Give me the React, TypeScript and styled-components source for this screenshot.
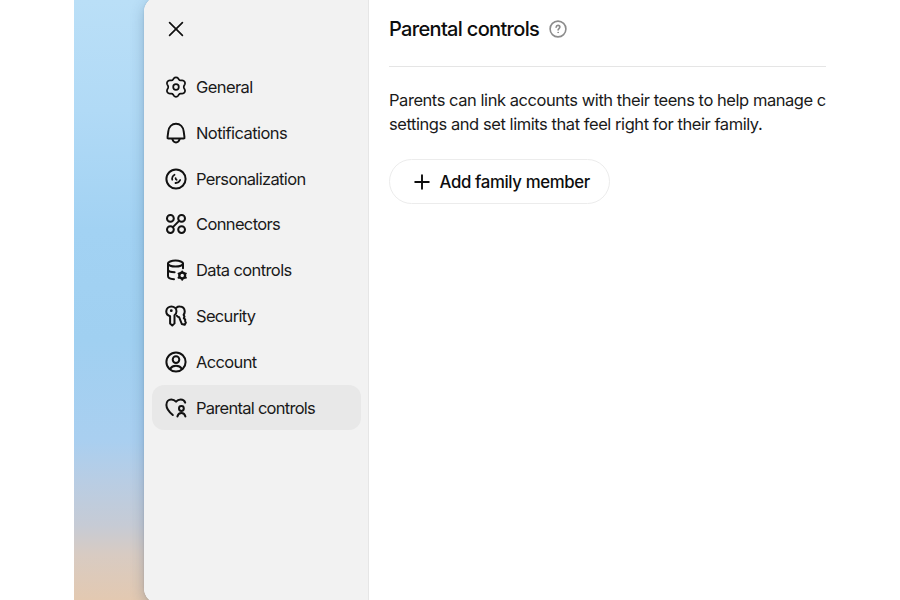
import React from "react";
import styled, { createGlobalStyle } from "styled-components";

const GlobalStyle = createGlobalStyle`
  * { box-sizing: border-box; }
  html, body { margin: 0; background: #fff; overflow: hidden; }
  body { font-family: Inter, "Liberation Sans", sans-serif; color: #1a1a1a; }
`;

const Page = styled.div`
  width: 900px;
  height: 600px;
  padding: 0 74px;
  overflow: hidden;
  background: #fff;
`;

const Backdrop = styled.div`
  width: 752px;
  height: 600px;
  padding-left: 69.5px;
  overflow: hidden;
  background: linear-gradient(180deg, #badff7 0, #b1daf6 110px, #a2d2f3 230px, #a0d0f1 340px, #a9cff0 440px, #b8cde4 480px, #c6cbd5 525px, #d8cbc2 555px, #e3c9b1 600px);
`;

const Dialog = styled.div`
  display: flex;
  width: 720px;
  height: 608px;
  margin-top: -4px;
  border-radius: 16px;
  background: #fff;
  box-shadow: 0 5px 14px rgba(40, 70, 100, 0.28), 0 0 2px rgba(40, 70, 100, 0.18);
  overflow: hidden;
`;

const Sidebar = styled.aside`
  flex: none;
  width: 225.5px;
  padding: 18px 7px 0 8px;
  background: #f2f2f2;
  border-right: 1px solid #e6e6e6;
`;

const CloseButton = styled.button`
  display: flex;
  align-items: center;
  width: 44px;
  height: 30px;
  padding: 0 0 0 13.5px;
  border: 0;
  background: none;
  color: #161616;
`;

const Nav = styled.nav`
  display: flex;
  flex-direction: column;
  gap: 0.85px;
  margin-top: 20.4px;
`;

const NavItem = styled.a<{ $active?: boolean }>`
  display: flex;
  align-items: center;
  height: 45px;
  padding-left: 13.5px;
  gap: 9px;
  border-radius: 12px;
  background: ${(p) => (p.$active ? "#e8e8e8" : "transparent")};
  svg { flex: none; }
`;

const NavLabel = styled.span<{ $spacing: number }>`
  font-size: 16.5px;
  line-height: 24px;
  letter-spacing: ${(p) => p.$spacing}px;
  white-space: nowrap;
`;

const Content = styled.main`
  flex: none;
  width: 457px;
  padding: 19px 0 0 20px;
  overflow: hidden;
`;

const Header = styled.header`
  display: flex;
  align-items: center;
  gap: 9.4px;
  height: 52px;
  padding-bottom: 24px;
  border-bottom: 1.5px solid #e5e5e5;
`;

const Title = styled.h1`
  margin: 0;
  font-size: 20px;
  line-height: 28px;
  font-weight: 500;
  letter-spacing: -0.67px;
  color: #0d0d0d;
`;

const Description = styled.p`
  margin: 20.5px 0 0;
  font-size: 16.5px;
  line-height: 24.4px;
  white-space: nowrap;
`;

const Line = styled.span<{ $spacing: number }>`
  display: block;
  letter-spacing: ${(p) => p.$spacing}px;
`;

const AddButton = styled.button`
  display: flex;
  align-items: center;
  width: 221px;
  height: 45px;
  margin-top: 23px;
  padding: 0 0 0 24px;
  gap: 9.5px;
  border: 1.5px solid #ececec;
  border-radius: 23px;
  background: #fff;
  font: 500 16.8px/24px Inter, "Liberation Sans", sans-serif;
  letter-spacing: -0.37px;
  color: #0d0d0d;
  white-space: nowrap;
`;

const Icon = ({ children, weight = 2 }: { children: React.ReactNode; weight?: number }) => (
  <svg width="22" height="22" viewBox="0 0 22 22" fill="none" stroke="#111" strokeWidth={weight} strokeLinecap="round" strokeLinejoin="round">
    {children}
  </svg>
);

const GearIcon = () => (
  <Icon weight={1.75}>
    <path d="M8.9 2.3C9.9.9 12.1.9 13.1 2.3L13.9 3.5Q14.5 4.4 15.6 4.4H17.2C19.3 4.4 20.7 6.4 19.8 8.3L19 9.8Q18.5 11 19 12.2L19.8 13.7C20.7 15.6 19.3 17.6 17.2 17.6H15.6Q14.5 17.6 13.9 18.5L13.1 19.7C12.1 21.1 9.9 21.1 8.9 19.7L8.1 18.5Q7.5 17.6 6.4 17.6H4.8C2.7 17.6 1.3 15.6 2.2 13.7L3 12.2Q3.5 11 3 9.8L2.2 8.3C1.3 6.4 2.7 4.4 4.8 4.4H6.4Q7.5 4.4 8.1 3.5Z" />
    <circle cx="11" cy="11" r="2.8" />
  </Icon>
);

const BellIcon = () => (
  <Icon weight={1.95}>
    <path d="M3.4 16.5h15.2q1.1 0 .9-1.1l-.8-6C18.2 4.9 15.2 1.7 11 1.7S3.8 4.9 3.3 9.4l-.8 6q-.2 1.1.9 1.1Z" />
    <path d="M7.3 17c.6 2.1 1.9 3.4 3.7 3.4s3.1-1.3 3.7-3.4" />
  </Icon>
);

const PersonalizationIcon = () => (
  <Icon>
    <circle cx="11" cy="11" r="9.6" />
    <path d="M9.5 6.7C8 7.6 7.1 9 7.1 10.6q0 .6.2 1.1M15.2 12c-.9 2-2.6 3.1-4.7 3M10.6 10.2q0 1.1 1 1.6" strokeWidth="1.8" />
  </Icon>
);

const ConnectorsIcon = () => (
  <Icon>
    <circle cx="5.4" cy="5.4" r="3.4" />
    <circle cx="16.6" cy="5.4" r="3.4" />
    <circle cx="5.4" cy="16.6" r="3.4" />
    <circle cx="16.6" cy="16.6" r="3.4" />
    <path d="M7.9 14.1l6.2-6.2" />
  </Icon>
);

const DataIcon = () => (
  <Icon>
    <ellipse cx="10.5" cy="4.6" rx="7.5" ry="3" />
    <path d="M3 4.6v12.5c0 1.8 2.6 3.1 6 3.2M18 4.6v4.6M3 10.8c.3 1.5 3 2.5 6.6 2.5" />
    <circle cx="17.2" cy="16.6" r="2.9" strokeWidth="2.3" />
    <path d="M17.2 12.5v.8m0 6.6v.8m-3.6-6.2.7.4m5.8 3.4.7.4m0-4.2-.7.4m-5.8 3.4-.7.4" strokeWidth="2" />
  </Icon>
);

const KeysIcon = () => (
  <Icon>
    <path d="M5.1 11.2C2.6 10.4 1.1 8.5 1.3 6.1 1.5 3.4 3.8 1.5 6.4 1.5c2.7 0 5 2 5.1 4.7 0 1.8-.8 3.2-2 4.1v8.1l-2.2 2.1-2.2-2Z" />
    <path d="M11.4 2.7c.9-.8 2.1-1.2 3.4-1.1 2.7.1 4.7 2.1 4.9 4.6.1 1.4-.3 2.6-1.1 3.6l.9 1.9-.7 1.5 1.4 1.3-.1 1.6.8 1.5-1.2 2.2-2.9-.8-2.6-6.7c-1-.3-1.8-.8-2.3-1.6" />
    <circle cx="6.3" cy="5.7" r=".8" fill="#111" stroke="#111" strokeWidth="1.2" />
  </Icon>
);

const AccountIcon = () => (
  <Icon>
    <circle cx="11" cy="11" r="9.6" />
    <circle cx="11" cy="8.6" r="3.3" />
    <path d="M5.2 17.8c1.2-2 3.3-3 5.8-3s4.6 1 5.8 3" />
  </Icon>
);

const FamilyIcon = () => (
  <Icon>
    <path d="M7.8 18C3.8 14.6 1.4 11.7 1.4 7.9c0-3.2 2.1-5.4 4.9-5.4 1.9 0 3.6.9 4.7 2.2 1.1-1.3 2.8-2.2 4.7-2.2 2.1 0 3.8 1.2 4.5 3.1" />
    <circle cx="16.4" cy="11.5" r="2.4" />
    <path d="M12.4 19.5c.5-2.2 1.9-3.6 4-3.6s3.5 1.4 4 3.6" />
  </Icon>
);

const items = [
  { label: "General", icon: <GearIcon />, spacing: -0.58 },
  { label: "Notifications", icon: <BellIcon />, spacing: -0.56 },
  { label: "Personalization", icon: <PersonalizationIcon />, spacing: -0.65 },
  { label: "Connectors", icon: <ConnectorsIcon />, spacing: -0.64 },
  { label: "Data controls", icon: <DataIcon />, spacing: -0.61 },
  { label: "Security", icon: <KeysIcon />, spacing: -0.68 },
  { label: "Account", icon: <AccountIcon />, spacing: -0.64 },
  { label: "Parental controls", icon: <FamilyIcon />, spacing: -0.73, active: true },
];

export default function App() {
  return (
    <Page>
      <GlobalStyle />
      <Backdrop>
        <Dialog>
          <Sidebar>
            <CloseButton aria-label="Close">
              <Icon weight={1.7}><path d="M4.6 4.6l12.8 12.8M17.4 4.6L4.6 17.4" /></Icon>
            </CloseButton>
            <Nav>
              {items.map((item) => (
                <NavItem key={item.label} $active={item.active}>
                  {item.icon}
                  <NavLabel $spacing={item.spacing}>{item.label}</NavLabel>
                </NavItem>
              ))}
            </Nav>
          </Sidebar>
          <Content>
            <Header>
              <Title>Parental controls</Title>
              <svg width="18" height="18" viewBox="0 0 18 18" fill="none" stroke="#8c8c8c" strokeWidth="1.6" strokeLinecap="round">
                <circle cx="9" cy="9" r="7.9" />
                <path d="M7.1 7.2C7.2 6 8 5.4 9 5.4c1.1 0 1.9.7 1.9 1.7 0 1.4-1.8 1.5-1.8 2.9" />
                <circle cx="9.1" cy="12.4" r=".4" fill="#8c8c8c" strokeWidth=".9" />
              </svg>
            </Header>
            <Description>
              <Line $spacing={-0.45}>Parents can link accounts with their teens to help manage c</Line>
              <Line $spacing={-0.44}>settings and set limits that feel right for their family.</Line>
            </Description>
            <AddButton>
              <svg width="16" height="16" viewBox="0 0 16 16" fill="none" stroke="#0d0d0d" strokeWidth="1.9" strokeLinecap="round">
                <path d="M8 1.2v13.6M1.2 8h13.6" />
              </svg>
              Add family member
            </AddButton>
          </Content>
        </Dialog>
      </Backdrop>
    </Page>
  );
}
